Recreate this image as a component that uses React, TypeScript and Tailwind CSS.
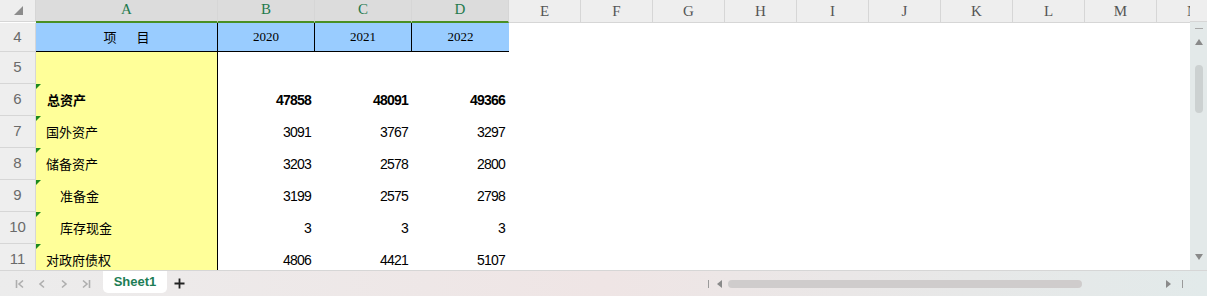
import React from 'react';

const cols = ['A', 'B', 'C', 'D', 'E', 'F', 'G', 'H', 'I', 'J', 'K', 'L', 'M', 'N'];
const colW = [182, 97, 97, 97, 72, 72, 72, 72, 72, 72, 72, 72, 72, 72];

const rows = [
    { n: 6, label: '总资产', v: ['47858', '48091', '49366'], bold: true, indent: false },
    { n: 7, label: '国外资产', v: ['3091', '3767', '3297'], bold: false, indent: false },
    { n: 8, label: '储备资产', v: ['3203', '2578', '2800'], bold: false, indent: false },
    { n: 9, label: '准备金', v: ['3199', '2575', '2798'], bold: false, indent: true },
    { n: 10, label: '库存现金', v: ['3', '3', '3'], bold: false, indent: true },
    { n: 11, label: '对政府债权', v: ['4806', '4421', '5107'], bold: false, indent: false },
];

const cjk = "font-['Noto_Sans_CJK_SC',sans-serif]";
const num = "font-['Liberation_Sans',Arial,sans-serif] text-[14px] tracking-[-0.8px] text-black";

function RowHead({ n, h }: { n?: number; h: string }) {
    return (
        <div className={`${h} w-[36px] shrink-0 bg-[#eeeeee] border-r border-b border-[#d6d6d6] flex items-center justify-center font-['Liberation_Sans',sans-serif] text-[15px] text-[#6a6a6a]`}>
            {n}
        </div>
    );
}

function Tri({ dir }: { dir: 'l' | 'r' | 'u' | 'd' }) {
    const pts = { l: '5,0 5,8 0,4', r: '0,0 0,8 5,4', u: '0,6 8,6 4,0', d: '0,0 8,0 4,6' }[dir];
    const side = dir === 'l' || dir === 'r';
    return (
        <svg width={side ? 5 : 8} height={side ? 8 : 6} viewBox={side ? '0 0 5 8' : '0 0 8 6'}>
            <polygon points={pts} fill="#8a8a8a" />
        </svg>
    );
}

export default function App() {
    return (
        <div className="w-[1207px] h-[296px] bg-white overflow-hidden select-none">
            <div className="flex h-[270px]">
                <div className="w-[1190px] overflow-hidden">
                    {/* column header */}
                    <div className="flex h-[23px]">
                        <div className="w-[36px] shrink-0 h-[22px] bg-[#eeeeee] border-r border-b border-[#d6d6d6] flex items-center justify-center">
                            <svg width="9" height="9" viewBox="0 0 9 9" className="ml-[2px]">
                                <polygon points="9,0 9,9 0,9" fill="#8c8c8c" />
                            </svg>
                        </div>
                        {cols.map((c, i) => (
                            <div
                                key={c}
                                style={{ width: colW[i] }}
                                className={`shrink-0 flex items-center justify-center font-['Liberation_Serif',serif] text-[15px] border-r border-[#d6d6d6] ${i < 4 ? 'h-[23px] pb-[2px] bg-[#dcdcdc] text-[#1f7a4d] border-b-2 border-b-[#4a8f24]' : 'h-[23px] bg-[#eeeeee] text-[#555555] border-b border-b-[#d6d6d6]'}`}
                            >
                                {c}
                            </div>
                        ))}
                    </div>

                    {/* row 4 */}
                    <div className="flex">
                        <RowHead n={4} h="h-[29px]" />
                        <div className={`h-[29px] w-[182px] shrink-0 bg-[#99ccff] border-r border-b border-black flex items-center justify-center gap-[20px] ${cjk} text-[13px] text-black`}>
                            <span>项</span>
                            <span>目</span>
                        </div>
                        {['2020', '2021', '2022'].map((y, i) => (
                            <div
                                key={y}
                                className={`h-[29px] w-[97px] shrink-0 bg-[#99ccff] border-b border-black flex items-center justify-center font-['Liberation_Serif',serif] text-[13px] text-black ${i < 2 ? 'border-r' : ''}`}
                            >
                                {y}
                            </div>
                        ))}
                    </div>

                    {/* row 5 */}
                    <div className="flex">
                        <RowHead n={5} h="h-[32px]" />
                        <div className="h-[32px] w-[182px] shrink-0 bg-[#ffff99] border-r border-black" />
                    </div>

                    {rows.map((r) => (
                        <div key={r.n} className="flex">
                            <RowHead n={r.n} h="h-[32px]" />
                            <div
                                className={`relative h-[32px] w-[182px] shrink-0 bg-[#ffff99] border-r border-black flex items-center ${r.indent ? 'pl-[24px]' : r.bold ? 'pl-[11px]' : 'pl-[10px]'} ${cjk} text-[13px] text-black ${r.bold ? 'font-bold' : ''}`}
                            >
                                <span className="absolute left-0 top-0 w-0 h-0 border-t-[5px] border-t-[#1d8a1d] border-r-[5px] border-r-transparent" />
                                {r.label}
                            </div>
                            {r.v.map((v, i) => (
                                <div
                                    key={i}
                                    className={`h-[32px] w-[97px] shrink-0 flex items-center justify-end pr-[4px] ${num} ${r.bold ? 'font-bold' : ''}`}
                                >
                                    {v}
                                </div>
                            ))}
                        </div>
                    ))}
                </div>

                {/* vertical scrollbar */}
                <div className="w-[17px] flex flex-col">
                    <div className="h-[22px] bg-[#eeeeee] border-b border-[#d6d6d6]" />
                    <div className="flex-1 bg-[#e3e9e9] flex flex-col items-center pt-[6px] pb-[10px]">
                        <div className="w-[8px] h-[1px] bg-[#a8a8a8]" />
                        <div className="mt-[10px]">
                            <Tri dir="u" />
                        </div>
                        <div className="mt-[20px] w-[8px] h-[48px] rounded-full bg-[#ccd1d1]" />
                        <div className="flex-1" />
                        <Tri dir="d" />
                    </div>
                </div>
            </div>

            {/* bottom bar */}
            <div className="h-[26px] border-t border-[#d6d6d6] bg-gradient-to-r from-[#ececec] via-[#efe5e5] to-[#e2eaea] flex items-start">
                <div className="h-[25px] flex items-center pl-[15px]">
                    <svg width="10" height="10" viewBox="0 0 10 10" className="mr-[12px]">
                        <path d="M1.5 1v8M8 1.5L4 5l4 3.5" stroke="#aeaeae" strokeWidth="1.6" fill="none" />
                    </svg>
                    <svg width="10" height="10" viewBox="0 0 10 10" className="mr-[12px]">
                        <path d="M7 1.5L3 5l4 3.5" stroke="#aeaeae" strokeWidth="1.6" fill="none" />
                    </svg>
                    <svg width="10" height="10" viewBox="0 0 10 10" className="mr-[12px]">
                        <path d="M3 1.5L7 5l-4 3.5" stroke="#aeaeae" strokeWidth="1.6" fill="none" />
                    </svg>
                    <svg width="10" height="10" viewBox="0 0 10 10">
                        <path d="M2 1.5L6 5l-4 3.5M8.5 1v8" stroke="#aeaeae" strokeWidth="1.6" fill="none" />
                    </svg>
                </div>
                <div className="ml-[12px] w-[64px] h-[22px] bg-white rounded-b-[5px] flex items-center justify-center font-['Liberation_Sans',sans-serif] font-bold text-[13px] text-[#1d7d55]">
                    Sheet1
                </div>
                <div className="ml-[7px] h-[25px] flex items-center">
                    <svg width="11" height="11" viewBox="0 0 11 11">
                        <path d="M5.5 0.5v10M0.5 5.5h10" stroke="#222222" strokeWidth="1.8" />
                    </svg>
                </div>
                <div className="ml-[523px] h-[25px] flex items-center">
                    <div className="w-[1px] h-[8px] bg-[#9a9a9a]" />
                    <div className="ml-[8px]">
                        <Tri dir="l" />
                    </div>
                    <div className="ml-[6px] w-[354px] h-[8px] rounded-full bg-[#cfcccc]" />
                    <div className="ml-[84px]">
                        <Tri dir="r" />
                    </div>
                    <div className="ml-[11px] w-[1px] h-[8px] bg-[#9a9a9a]" />
                </div>
            </div>
        </div>
    );
}
